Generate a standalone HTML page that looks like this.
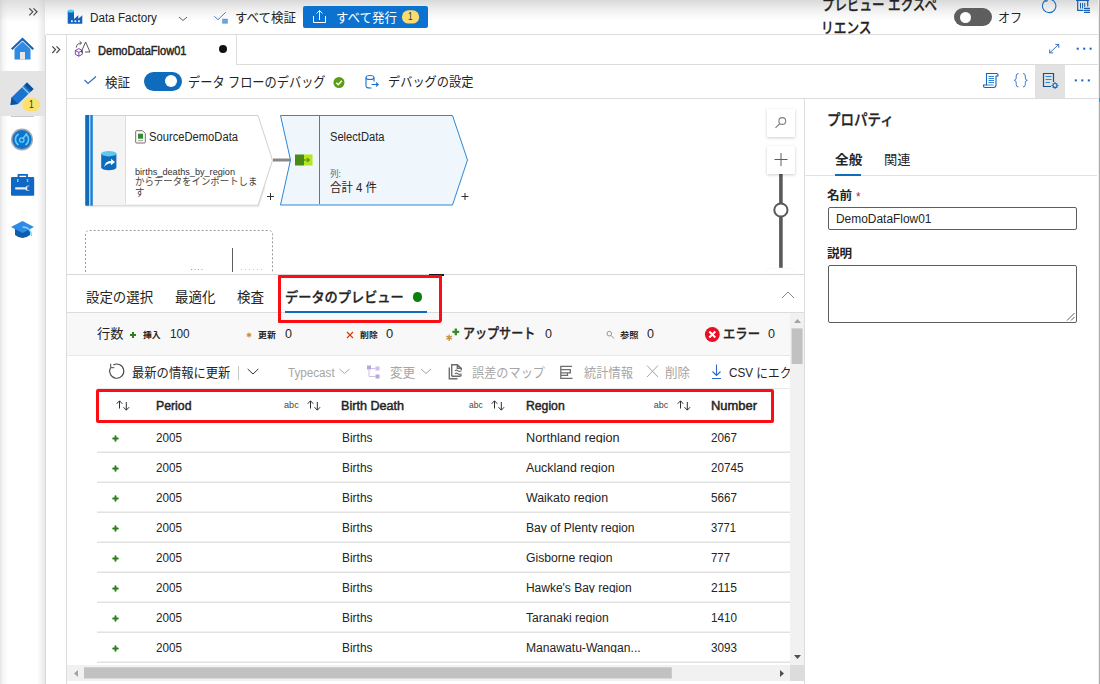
<!DOCTYPE html>
<html lang="ja">
<head>
<meta charset="utf-8">
<title>Data Factory</title>
<style>
*{box-sizing:border-box;margin:0;padding:0}
html,body{width:1100px;height:684px;overflow:hidden;background:#fff}
body{position:relative;font-family:"Liberation Sans","Noto Sans CJK JP",sans-serif;font-size:13px;color:#252423}
.a{position:absolute;white-space:nowrap}
.ln{position:absolute;background:#e1dfdd}
svg{position:absolute;overflow:visible}
.t{position:absolute;white-space:nowrap;line-height:20px;height:20px;transform-origin:0 50%}
</style>
</head>
<body>
<!-- top shadow gradient -->
<div class="a" style="left:0;top:0;width:1100px;height:22px;background:linear-gradient(#d9d9d9 0,#e6e6e6 25%,#f3f3f3 55%,#fcfcfc 85%,#fff 100%)"></div>

<!-- SIDEBAR -->
<div class="a" style="left:0;top:0;width:45px;height:684px;background:linear-gradient(90deg,#e4e4e4 0,#f6f6f6 3px,#fff 8px,#fff 37px,#f4f4f4 41px,#e8e8e8 45px)"></div>
<div class="a" style="left:0;top:0;width:45px;height:22px;background:linear-gradient(rgba(200,200,200,.6),rgba(255,255,255,0))"></div>
<div class="a" style="left:0;top:71px;width:45px;height:45px;background:#e4e4e4"></div>
<div class="ln" style="left:45px;top:35px;width:1px;height:649px;background:#d8d8d8"></div>
<div class="ln" style="left:11px;top:116px;width:23px;height:1px;background:#c8c8c8"></div>
<svg style="left:0;top:0" width="46" height="260">
 <path d="M29.300 8.300 L32.800 11.800 L29.300 15.300 M33.500 8.300 L37 11.800 L33.500 15.300" fill="none" stroke="#484644" stroke-width="1.200"/>
 <!-- home -->
 <path d="M22.500 37.500 L34 48.500 L32.500 50 L22.500 40.500 L12.500 50 L11 48.500 Z" fill="#1565b8"/>
 <path d="M14.500 49 L22.500 41.500 L30.500 49 V59.500 H14.500 Z" fill="#2f8ae6"/>
 <rect x="20" y="52" width="5" height="7.500" fill="#e8e6e3"/>
 <!-- pencil -->
 <path d="M27 82.500 L33.500 89 L18 104 L10.500 105 L11.500 97.500 Z" fill="#1a73cf"/>
 <path d="M27 82.500 L33.500 89 L31 91.500 L24.500 85 Z" fill="#0c4f9c"/>
 <path d="M22.500 87 L29 93.500" stroke="#7fd0f5" stroke-width="1.500"/>
 <path d="M11.500 97.500 L10.500 105 L18 104 Z" fill="#0c4f9c"/>
 <rect x="22.200" y="98" width="18" height="13.300" rx="6.600" fill="#fbe16d"/>
 <!-- monitor -->
 <circle cx="22" cy="139.500" r="11" fill="#a8a8a8"/>
 <circle cx="22" cy="139.500" r="9.600" fill="#1273cf"/>
 <path d="M18.500 145 A6.500 6.500 0 0 1 18.500 134 M25.500 134 A6.500 6.500 0 0 1 25.500 145" fill="none" stroke="#5fd0f7" stroke-width="1.500"/>
 <path d="M22.500 139 L27 133.500" stroke="#5fd0f7" stroke-width="1.600"/>
 <circle cx="21.800" cy="140" r="2.200" fill="none" stroke="#5fd0f7" stroke-width="1.300"/>
 <!-- toolbox -->
 <path d="M18.500 177.500 V174.800 H27 V177.500" fill="none" stroke="#1068c4" stroke-width="1.800"/>
 <rect x="11" y="177" width="23.200" height="18.700" rx="1" fill="#1068c4"/>
 <rect x="17" y="179" width="1.500" height="3" fill="#5fd0f7"/><rect x="26.800" y="179" width="1.500" height="3" fill="#5fd0f7"/>
 <path d="M15.200 187.300 H25.500 A3 3 0 0 1 30 186.200 H27.300 V190.400 H30 A3 3 0 0 1 25.500 189.500 H15.200 Z" fill="#e8eef5"/>
 <!-- grad cap -->
 <path d="M15 229 V235 Q22.500 241 30 235 V229 Z" fill="#0f5bab"/>
 <path d="M11 227 L22.500 221 L34 227 L22.500 233 Z" fill="#2f8ae6"/>
 <path d="M22.500 227 Q31 227 31.500 236" fill="none" stroke="#7fd8f7" stroke-width="1.500"/>
</svg>
<div class="t" style="left:28.8px;top:94.7px;font-size:10px;color:#333;transform:scaleX(0.845);">1</div>

<!-- TOP BAR -->
<div class="ln" style="left:46px;top:34px;width:1054px;height:1px;background:#dcdcdc"></div>
<svg style="left:0;top:0" width="1100" height="35">
 <!-- factory icon -->
 <path d="M67.700 11 V23.700 H82.300 V15.300 L78.300 18.800 V15.300 L74 19 V11 Z" fill="#0f63bd"/>
 <ellipse cx="70.850" cy="11" rx="3.150" ry="1.500" fill="#4fc8f0"/>
 <rect x="71" y="20.300" width="1.800" height="1.800" fill="#e8f0fa"/><rect x="74.500" y="20.300" width="1.800" height="1.800" fill="#e8f0fa"/><rect x="78" y="20.300" width="1.800" height="1.800" fill="#e8f0fa"/>
 <path d="M179 17 L183 20.500 L187 17" fill="none" stroke="#605e5c"/>
 <!-- validate all icon -->
 <path d="M214.300 16.300 L218 19.700 L225.800 12.200" fill="none" stroke="#3a6fc4" stroke-width="0.900"/>
 <rect x="222.200" y="18.800" width="5.600" height="4.800" fill="#5b9bd5"/><path d="M222 20.400 H228 M222 22 H228" stroke="#9cc3ea" stroke-width="0.400"/>
</svg>
<div class="t" style="left:89.5px;top:7.6px;font-size:12px;transform:scaleX(0.975);">Data Factory</div>
<div class="t" style="left:234.5px;top:7.5px;font-size:13px;transform:scaleX(0.959);">すべて検証</div>
<div class="a" style="left:303px;top:6px;width:125px;height:22px;border-radius:2px;background:#0c72d0"></div>
<svg style="left:0;top:0" width="1100" height="35">
 <path d="M313.500 16 V22.500 H325.500 V16 M319.500 20 V11 M316.500 13.500 L319.500 10.500 L322.500 13.500" fill="none" stroke="#fff" stroke-width="1"/>
 <!-- refresh + icon right -->
 <path d="M1051.600 -0.300 A6.700 6.700 0 1 1 1047 -0.400" fill="none" stroke="#1a6fc4" stroke-width="1.100"/>
 <path d="M1047.200 -2 V1.200 H1044.500" fill="none" stroke="#1a6fc4" stroke-width="1"/>
 <path d="M1076 0.300 H1089 M1077.700 0 V10.300 H1083.500 M1087.700 0 V6.500" fill="none" stroke="#1a5fb0" stroke-width="1.200"/>
 <path d="M1080.500 3 V8.500 M1082.600 3 V8.500 M1084.700 3 V7" stroke="#1a5fb0" stroke-width="1"/>
 <path d="M1084 8.300 H1090 M1084 10.300 H1090 M1084 12.300 H1090" stroke="#1a5fb0" stroke-width="1.200"/>
</svg>
<div class="t" style="left:335.5px;top:7.5px;font-size:13px;color:#fff;transform:scaleX(0.959);">すべて発行</div>
<svg style="left:395px;top:5px" width="30" height="24"><rect x="6.900" y="5.300" width="17.300" height="13.300" rx="6.650" fill="#f9dc6e"/></svg>
<div class="t" style="left:408.2px;top:7.2px;font-size:10px;color:#333;transform:scaleX(0.827);">1</div>
<div class="a" style="left:800px;top:0;width:160px;height:34px;overflow:hidden">
<div class="a" style="left:-800px;top:0">
<div class="t" style="left:821.5px;top:-5.5px;font-size:15px;font-weight:500;-webkit-text-stroke:0.3px;transform:scaleX(0.835);">プレビュー エクスペ</div>
<div class="t" style="left:821.0px;top:18.3px;font-size:15px;font-weight:500;-webkit-text-stroke:0.3px;transform:scaleX(0.846);">リエンス</div>
</div></div>
<div class="a" style="left:954px;top:7.500px;width:38px;height:18.500px;border-radius:10px;background:#5e5e5e"></div>
<div class="a" style="left:959.500px;top:11.500px;width:11px;height:11px;border-radius:6px;background:#fff"></div>
<div class="t" style="left:998.0px;top:7.5px;font-size:13px;transform:scaleX(0.930);">オフ</div>

<!-- TAB ROW -->
<div class="ln" style="left:66px;top:35px;width:1px;height:649px;background:#dcdcdc"></div>
<div class="ln" style="left:236px;top:35px;width:1px;height:30px;background:#dcdcdc"></div>
<div class="ln" style="left:236px;top:64px;width:864px;height:1px;background:#dcdcdc"></div>
<div class="ln" style="left:1098px;top:0;width:1px;height:684px;background:#f0f0f0"></div><div class="ln" style="left:1099px;top:0;width:1px;height:684px;background:#ababab"></div>
<div class="a" style="left:1099px;top:98px;width:1px;height:4px;background:#4a90b0"></div>
<svg style="left:0;top:0" width="1100" height="100">
 <path d="M52.300 46.300 L55.500 49.600 L52.300 53 M56.500 46.300 L59.700 49.600 L56.500 53" fill="none" stroke="#484644" stroke-width="1.200"/>
 <!-- dataflow icon -->
 <path d="M75.300 50.500 L78.800 48.600 L82.300 50.500 V54.300 L78.800 56.200 L75.300 54.300 Z M75.300 50.500 L78.800 52.400 L82.300 50.500 M78.800 52.400 V56.200" fill="none" stroke="#6b2fa0" stroke-width="0.900"/>
 <path d="M83 52 L81.200 52 L85.600 42 L90 52 H85" fill="none" stroke="#484644" stroke-width="0.900"/>
 <path d="M76.300 47.500 Q76.800 43.200 81.300 43 M79.600 41.200 L81.600 43 L79.600 44.800" fill="none" stroke="#484644" stroke-width="0.900"/>
 <!-- expand + dots -->
 <path d="M1049.700 52.900 L1058.800 44.400 M1055.300 44.400 H1058.800 V47.900 M1049.700 49.400 V52.900 H1053.200" fill="none" stroke="#2b62c0" stroke-width="0.900"/>
 <rect x="1076.700" y="47.700" width="2" height="2" fill="#1a5fc4"/><rect x="1083.200" y="47.700" width="2" height="2" fill="#1a5fc4"/><rect x="1089.600" y="47.700" width="2" height="2" fill="#1a5fc4"/>
</svg>
<div class="t" style="left:97.5px;top:40.8px;font-size:12px;transform:scaleX(0.921);-webkit-text-stroke:0.45px;">DemoDataFlow01</div>
<div class="a" style="left:218.500px;top:45px;width:8px;height:8px;border-radius:4px;background:#111"></div>

<!-- TOOLBAR 2 -->
<div class="ln" style="left:67px;top:98px;width:1031px;height:1px;background:#dcdcdc"></div>
<div class="a" style="left:1035px;top:65px;width:30px;height:33px;background:#e2e2e2"></div>
<svg style="left:0;top:0" width="1100" height="100">
 <path d="M84.500 80 L88 83.500 L96 76.500" fill="none" stroke="#2b6cc4" stroke-width="1.100"/>
 <!-- green check -->
 <circle cx="339" cy="82.500" r="5.500" fill="#5b9e16"/>
 <path d="M336.300 82.700 L338.300 84.700 L341.800 80.700" fill="none" stroke="#fff" stroke-width="1.400"/>
 <!-- debug settings icon -->
 <path d="M366 77.500 V86 Q366 88 370 88 H371.500 M374 81.500 V77.500" fill="none" stroke="#1a73cf" stroke-width="1.100"/>
 <ellipse cx="370" cy="77.500" rx="4" ry="2" fill="none" stroke="#1a73cf" stroke-width="1.100"/>
 <path d="M371.500 84.500 H378 M376 82.500 L378.200 84.500 L376 86.500" fill="none" stroke="#1a73cf" stroke-width="1.100"/>
 <!-- script icon -->
 <path d="M986.500 73.500 H996.500 Q998 73.500 998 75 V76 H996 V85 Q996 87.500 993.500 87.500 H985 Q983.500 87.500 983.500 86 V85 H986.500 Z" fill="none" stroke="#1565b8" stroke-width="1.100"/>
 <path d="M988.500 76.500 H994 M988.500 78.500 H994 M988.500 80.500 H994 M988.500 82.500 H994 M986.500 85 H993.500" stroke="#2b88d8" stroke-width="1"/>
 <path d="M1018.500 73.500 Q1016.200 73.500 1016.200 76 V78 Q1016.200 80 1014.200 80.300 Q1016.200 80.600 1016.200 82.500 V84.500 Q1016.200 87 1018.500 87 M1023 73.500 Q1025.300 73.500 1025.300 76 V78 Q1025.300 80 1027.300 80.300 Q1025.300 80.600 1025.300 82.500 V84.500 Q1025.300 87 1023 87" fill="none" stroke="#3a7bd0" stroke-width="1"/>
 <!-- properties icon -->
 <path d="M1051 86.500 H1043.500 V73.500 H1053.500 V82" fill="none" stroke="#1b4f91" stroke-width="1.200"/>
 <path d="M1045.500 76.500 H1051.500 M1045.500 79.500 H1051.500 M1045.500 82.500 H1050" stroke="#2b88d8" stroke-width="1.200"/>
 <circle cx="1055" cy="85.500" r="2" fill="none" stroke="#1565b8" stroke-width="1.200"/>
 <path d="M1055 82 V83 M1055 88 V89 M1051.500 85.500 H1052.500 M1057.500 85.500 H1058.500 M1052.600 83.100 L1053.300 83.800 M1056.700 87.200 L1057.400 87.900 M1052.600 87.900 L1053.300 87.200 M1056.700 83.800 L1057.400 83.100" stroke="#1565b8" stroke-width="1"/>
 <rect x="1074.800" y="79.400" width="2" height="2" fill="#1a5fc4"/><rect x="1081.300" y="79.400" width="2" height="2" fill="#1a5fc4"/><rect x="1087.800" y="79.400" width="2" height="2" fill="#1a5fc4"/>
</svg>
<div class="t" style="left:104.5px;top:73.0px;font-size:13px;transform:scaleX(0.961);">検証</div>
<div class="a" style="left:144px;top:72px;width:38px;height:18.500px;border-radius:10px;background:#0f6cbd"></div>
<div class="a" style="left:164.500px;top:75.300px;width:12px;height:12px;border-radius:6px;background:#fff"></div>
<div class="t" style="left:187.5px;top:71.8px;font-size:14px;transform:scaleX(0.871);">データ フローのデバッグ</div>
<div class="t" style="left:387.5px;top:71.8px;font-size:13px;transform:scaleX(0.938);">デバッグの設定</div>

<!-- CANVAS (page coords) -->
<svg style="left:0;top:0" width="1100" height="684">
 <!-- source node -->
 <path d="M86 206.500 H258.500 L265 186" fill="none" stroke="#ececec" stroke-width="1.500"/>
 <path d="M85.500 115.500 H258 L272.500 160.300 L258 205.200 H85.500 Z" fill="#fff" stroke="#d2d0ce" stroke-width="1"/>
 <rect x="93" y="116" width="32" height="88.700" fill="#f4f4f4"/>
 <line x1="125.500" y1="116" x2="125.500" y2="204.700" stroke="#e1dfdd"/>
 <rect x="85.300" y="115" width="4" height="90.700" fill="#0f6cbd"/>
 <rect x="90.300" y="115" width="2.500" height="90.700" fill="#1a7fd6"/>
 <!-- connector -->
 <rect x="273" y="158.500" width="18" height="3" fill="#8a8886"/>
 <!-- select node -->
 <path d="M280.500 115.500 H452.500 L467.500 160 L452.500 205 H280.500 L290.500 160 Z" fill="#eff6fc" stroke="#2b88d8" stroke-width="1"/>
 <line x1="319.500" y1="116" x2="319.500" y2="204" stroke="#2b88d8"/>
 <!-- select icon -->
 <rect x="295" y="154.500" width="9" height="11" fill="#4b8a14"/>
 <rect x="304" y="154.500" width="8.500" height="11" fill="#b5e61d"/>
 <path d="M303 160 H309 M307 158 L309.500 160 L307 162" stroke="#3c7a10" stroke-width="1" fill="none"/>
 <!-- plus signs -->
 <path d="M267 196.500 H274 M270.500 193 V200" stroke="#323130" stroke-width="1"/>
 <path d="M461.500 196.500 H468.500 M465 193 V200" stroke="#323130" stroke-width="1"/>
 <!-- DB icon -->
 <path d="M101.200 153.700 V167.500 A7.600 2.700 0 0 0 116.400 167.500 V153.700 Z" fill="#0f6cbd"/>
 <ellipse cx="108.800" cy="153.700" rx="7.600" ry="2.700" fill="#5ec8ee"/>
 <path d="M104.300 167 C104.800 162.500 108 161 111 161 V158.800 L115 162 L111 165.200 V163.200 C108.300 163.200 105.800 164.300 104.300 167 Z" fill="#fff"/>
 <!-- file icon -->
 <path d="M135.700 131.500 Q135.700 130.700 136.500 130.700 H142.500 L145.300 133.500 V142.200 Q145.300 143 144.500 143 H136.500 Q135.700 143 135.700 142.200 Z" fill="#fff" stroke="#605e5c" stroke-width="0.900"/>
 <rect x="138" y="133.700" width="5" height="5" fill="#2e8b2e"/>
 <path d="M138 140.700 H143" stroke="#8a8886" stroke-width="0.800"/>
 <!-- dashed box -->
 <path d="M85.500 272 V234.500 Q85.500 230.500 89.500 230.500 H268.500 Q272.500 230.500 272.500 234.500 V272" fill="none" stroke="#9a9a9a" stroke-dasharray="2 2"/>
 <line x1="232.500" y1="248" x2="232.500" y2="272" stroke="#605e5c"/>
 <line x1="191" y1="269.500" x2="203" y2="269.500" stroke="#a19f9d" stroke-dasharray="1 2.500"/>
 <line x1="241" y1="269.500" x2="264" y2="269.500" stroke="#c8c6c4" stroke-dasharray="1 3"/>
 <!-- zoom ctl -->
 <rect x="779.100" y="174" width="3.600" height="93.800" fill="#595959"/>
 <circle cx="780.900" cy="210" r="6.600" fill="#fff" stroke="#595959" stroke-width="2"/>
 <circle cx="782.300" cy="121" r="3.400" fill="none" stroke="#807e7c" stroke-width="1.100"/>
 <line x1="779.800" y1="123.500" x2="775.500" y2="127.800" stroke="#807e7c" stroke-width="1.100"/>
 <path d="M774.500 159.500 H787.500 M781 153 V166" stroke="#605e5c" stroke-width="1"/>
</svg>
<div class="a" style="left:767px;top:109px;width:28px;height:28px;box-shadow:0 1px 3px rgba(0,0,0,.2)"></div>
<div class="a" style="left:767px;top:146px;width:28px;height:28px;box-shadow:0 1px 3px rgba(0,0,0,.2)"></div>
<div class="a" style="left:767px;top:269px;width:28px;height:5px;background:#fff;box-shadow:0 0 2px rgba(0,0,0,.08)"></div>
<div class="t" style="left:148.5px;top:127.0px;font-size:12px;transform:scaleX(0.933);">SourceDemoData</div>
<div class="t" style="left:135.0px;top:162.0px;font-size:9.5px;color:#323130;transform:scaleX(0.961);">births_deaths_by_region</div>
<div class="t" style="left:135.0px;top:172.0px;font-size:10px;color:#484644;transform:scaleX(0.942);">からデータをインポートしま</div>
<div class="t" style="left:135.0px;top:182.5px;font-size:10px;color:#484644;transform:scaleX(0.950);">す</div>
<div class="t" style="left:329.5px;top:127.0px;font-size:12px;transform:scaleX(0.928);">SelectData</div>
<div class="t" style="left:329.5px;top:164.0px;font-size:9px;color:#605e5c;transform:scaleX(0.955);">列:</div>
<div class="t" style="left:329.5px;top:177.5px;font-size:12px;transform:scaleX(0.953);">合計 4 件</div>

<!-- RIGHT PANEL -->
<div class="ln" style="left:804px;top:99px;width:1px;height:585px;background:#dcdcdc"></div>
<div class="t" style="left:827.3px;top:110.0px;font-size:15px;font-weight:500;-webkit-text-stroke:0.3px;transform:scaleX(0.900);">プロパティ</div>
<div class="t" style="left:834.5px;top:149.7px;font-size:13px;font-weight:bold;transform:scaleX(1.049);">全般</div>
<div class="t" style="left:883.5px;top:149.7px;font-size:13px;transform:scaleX(1.022);">関連</div>
<div class="ln" style="left:805px;top:175px;width:292px;height:1px;background:#e1e1e1"></div>
<div class="a" style="left:835px;top:173.500px;width:26px;height:2.500px;background:#0f6cbd"></div>
<div class="t" style="left:827.3px;top:186.0px;font-size:12px;font-weight:bold;transform:scaleX(1.049);">名前</div>
<div class="t" style="left:856.0px;top:187.0px;font-size:12px;color:#a4262c;transform:scaleX(0.963);">*</div>
<div class="a" style="left:827.500px;top:207px;width:249.500px;height:23px;border:1px solid #605e5c;border-radius:2px"></div>
<div class="t" style="left:836.0px;top:209.0px;font-size:12px;transform:scaleX(0.994);">DemoDataFlow01</div>
<div class="t" style="left:827.3px;top:244.0px;font-size:12px;font-weight:bold;transform:scaleX(1.049);">説明</div>
<div class="a" style="left:827.500px;top:265px;width:249.500px;height:58px;border:1px solid #605e5c;border-radius:2px"></div>
<svg style="left:1066px;top:312px" width="9" height="9"><path d="M1 8.500 L8.500 1 M5 8.500 L8.500 5" stroke="#605e5c" stroke-width="1"/></svg>

<!-- BOTTOM PANEL -->
<div class="ln" style="left:67px;top:274px;width:737px;height:1px;background:#d8d8d8"></div>
<div class="t" style="left:86.4px;top:286.5px;font-size:14px;transform:scaleX(0.959);">設定の選択</div>
<div class="t" style="left:174.7px;top:286.5px;font-size:14px;transform:scaleX(0.962);">最適化</div>
<div class="t" style="left:236.5px;top:286.5px;font-size:14px;transform:scaleX(0.964);">検査</div>
<div class="t" style="left:285.4px;top:286.5px;font-size:14px;font-weight:500;-webkit-text-stroke:0.3px;transform:scaleX(0.942);">データのプレビュー</div>
<div class="a" style="left:412.800px;top:292.300px;width:9.400px;height:9.400px;border-radius:5px;background:#0c800c"></div>
<div class="a" style="left:428.700px;top:273.500px;width:15px;height:2px;background:#1a1a1a"></div>
<svg style="left:781px;top:291px" width="14" height="8"><path d="M1 7 L7 1 L13 7" fill="none" stroke="#8a8886"/></svg>
<div class="a" style="left:67px;top:313px;width:723px;height:42px;background:#f8f8f8"></div>
<div class="ln" style="left:67px;top:312px;width:737px;height:1px;background:#dcdcdc"></div>
<div class="ln" style="left:67px;top:355px;width:723px;height:1px;background:#e8e8e8"></div>
<div class="a" style="left:285px;top:311px;width:142px;height:2px;background:#0f6cbd"></div>
<div class="a" style="left:278px;top:274.700px;width:164px;height:48px;border:3px solid #fb0d13;border-radius:1px 1px 3px 1px"></div>
<!-- stats row -->
<svg style="left:0;top:320px" width="804" height="30">
 <path d="M133 12 V18 M130 15 H136" stroke="#2e7d1e" stroke-width="2"/>
 <path d="M249.00 12.40 L249.00 17.60 M246.75 13.70 L251.25 16.30 M251.25 13.70 L246.75 16.30" stroke="#c98d35" stroke-width="1.100"/>
 <path d="M347 12 L353 18 M353 12 L347 18" stroke="#d83b01" stroke-width="1.200"/>
 <path d="M449.20 14.50 L449.20 20.90 M446.43 16.10 L451.97 19.30 M451.97 16.10 L446.43 19.30" stroke="#c98d35" stroke-width="1.300"/>
 <path d="M455.800 8.500 V15.300 M452.400 11.900 H459.200" stroke="#3a8a2a" stroke-width="2.400"/>
 <circle cx="609.300" cy="13.700" r="2.300" fill="none" stroke="#8a8886" stroke-width="0.900"/><path d="M611 15.500 L614 18.500" stroke="#8a8886" stroke-width="0.900"/>
 <circle cx="712.300" cy="14.500" r="7.400" fill="#e81123"/>
 <path d="M709.300 11.500 L715.300 17.500 M715.300 11.500 L709.300 17.500" stroke="#fff" stroke-width="2"/>
</svg>
<div class="t" style="left:96.5px;top:323.7px;font-size:13px;transform:scaleX(1.019);">行数</div>
<div class="t" style="left:142.9px;top:325.0px;font-size:8.5px;font-weight:bold;transform:scaleX(1.034);">挿入</div>
<div class="t" style="left:169.5px;top:323.7px;font-size:12px;transform:scaleX(0.983);">100</div>
<div class="t" style="left:257.9px;top:325.0px;font-size:8.5px;font-weight:bold;transform:scaleX(1.046);">更新</div>
<div class="t" style="left:284.5px;top:323.7px;font-size:12px;transform:scaleX(1.047);">0</div>
<div class="t" style="left:360.1px;top:325.0px;font-size:8.5px;font-weight:bold;transform:scaleX(1.046);">削除</div>
<div class="t" style="left:386.3px;top:323.7px;font-size:12px;transform:scaleX(1.077);">0</div>
<div class="t" style="left:462.9px;top:322.6px;font-size:14px;font-weight:500;-webkit-text-stroke:0.3px;transform:scaleX(0.860);">アップサート</div>
<div class="t" style="left:544.9px;top:323.7px;font-size:12px;transform:scaleX(1.047);">0</div>
<div class="t" style="left:620.0px;top:325.0px;font-size:8.5px;font-weight:bold;transform:scaleX(1.087);">参照</div>
<div class="t" style="left:646.8px;top:323.7px;font-size:12px;transform:scaleX(1.047);">0</div>
<div class="t" style="left:722.5px;top:323.7px;font-size:13px;font-weight:500;-webkit-text-stroke:0.3px;transform:scaleX(0.948);">エラー</div>
<div class="t" style="left:768.0px;top:323.7px;font-size:12px;transform:scaleX(1.047);">0</div>
<!-- action row -->
<svg style="left:0;top:360px" width="804" height="30">
 <path d="M113.37 4.93 A7.1 7.1 0 1 1 110.43 7.87" fill="none" stroke="#484644" stroke-width="1.100"/>
 <path d="M110.700 3.800 V7.700 H114.300" fill="none" stroke="#484644" stroke-width="1"/>
 <path d="M247.700 9 L253 14 L258.300 9" fill="none" stroke="#323130"/>
 <path d="M339.500 9 L344.500 13.500 L349.500 9" fill="none" stroke="#a6a6a6"/>
 <path d="M421 9 L426 13.500 L431 9" fill="none" stroke="#a6a6a6"/>
 <!-- change icon purple -->
 <rect x="367" y="5.500" width="4" height="4" fill="#b9a4dd"/><rect x="375.500" y="6.500" width="4" height="4" fill="#cdbfe8"/><rect x="375.500" y="14.500" width="4" height="4" fill="#b9a4dd"/>
 <path d="M369 9.500 V16.500 H375.500 M371 8.500 H375.500" fill="none" stroke="#cdbfe8" stroke-width="1"/>
 <!-- error map icon -->
 <path d="M449.300 7.500 V18.700 H457.500 M451.700 16.300 V4.700 H457.300 L461.300 8.300 V10 M451.700 16.300 H459.500 Q461.300 16.300 461.300 14.800 M457.300 4.700 V8.300 H461.300" fill="none" stroke="#6e6e6e" stroke-width="1.400"/>
 <path d="M455 10.800 Q456.500 9.500 458 10.800 T461.500 10.600 M455 13.800 Q456.500 12.500 458 13.800 T461.500 13.600" fill="none" stroke="#6e6e6e" stroke-width="1.100"/>
 <!-- stats icon -->
 <path d="M560.800 5.800 V18.300 H572.500 M560.800 6.400 H572 M560.800 9.700 H570.300 V12.800 H560.800 M560.800 15.400 H567.500 V12.800" fill="none" stroke="#6e6e6e" stroke-width="1.300"/>
 <path d="M647 5.500 L658 17 M658 5.500 L647 17" stroke="#a6a6a6" stroke-width="1"/>
 <path d="M716.500 4.500 V15.500 M712.500 11.500 L716.500 15.500 L720.500 11.500 M712 18.500 H721" fill="none" stroke="#2b6cc4" stroke-width="1.100"/>
</svg>
<div class="t" style="left:131.5px;top:362.5px;font-size:13px;transform:scaleX(0.946);">最新の情報に更新</div>
<div class="a" style="left:238px;top:366px;width:1px;height:14px;background:#c8c6c4"></div>
<div class="t" style="left:287.5px;top:362.5px;font-size:12px;color:#a6a6a6;transform:scaleX(0.972);">Typecast</div>
<div class="t" style="left:390.1px;top:362.5px;font-size:13px;color:#a6a6a6;transform:scaleX(0.969);">変更</div>
<div class="t" style="left:472.1px;top:362.5px;font-size:13px;color:#a6a6a6;transform:scaleX(0.936);">誤差のマップ</div>
<div class="t" style="left:583.5px;top:362.5px;font-size:13px;color:#a6a6a6;transform:scaleX(0.942);">統計情報</div>
<div class="t" style="left:665.1px;top:362.5px;font-size:13px;color:#a6a6a6;transform:scaleX(0.961);">削除</div>
<div class="a" style="left:720px;top:360px;width:70px;height:28px;overflow:hidden"><div class="a" style="left:-720px;top:-360px"><div class="t" style="left:728.5px;top:362.5px;font-size:13px;transform:scaleX(0.901);">CSV にエクスポート</div></div></div>
<div class="ln" style="left:97px;top:388px;width:693px;height:1px;background:#e8e8e8"></div>
<!-- header row -->
<svg style="left:115.500px;top:399.500px" width="14" height="11"><path d="M3.500 8.500 V1 M0.700 3.800 L3.500 0.800 L6.300 3.800 M10.300 2 V10 M7.500 7.200 L10.300 10.200 L13.100 7.200" fill="none" stroke="#323130" stroke-width="1"/></svg>
<svg style="left:306.800px;top:399.500px" width="14" height="11"><path d="M3.500 8.500 V1 M0.700 3.800 L3.500 0.800 L6.300 3.800 M10.300 2 V10 M7.500 7.200 L10.300 10.200 L13.100 7.200" fill="none" stroke="#323130" stroke-width="1"/></svg>
<svg style="left:491px;top:399.500px" width="14" height="11"><path d="M3.500 8.500 V1 M0.700 3.800 L3.500 0.800 L6.300 3.800 M10.300 2 V10 M7.500 7.200 L10.300 10.200 L13.100 7.200" fill="none" stroke="#323130" stroke-width="1"/></svg>
<svg style="left:676.500px;top:399.500px" width="14" height="11"><path d="M3.500 8.500 V1 M0.700 3.800 L3.500 0.800 L6.300 3.800 M10.300 2 V10 M7.500 7.200 L10.300 10.200 L13.100 7.200" fill="none" stroke="#323130" stroke-width="1"/></svg>
<div class="t" style="left:156.2px;top:396.0px;font-size:12px;color:#252423;transform:scaleX(1.023);-webkit-text-stroke:0.45px;">Period</div>
<div class="t" style="left:283.8px;top:395.0px;font-size:9px;color:#484644;transform:scaleX(1.013);">abc</div>
<div class="t" style="left:341.3px;top:396.0px;font-size:12px;color:#252423;transform:scaleX(1.051);-webkit-text-stroke:0.45px;">Birth Death</div>
<div class="t" style="left:468.5px;top:395.0px;font-size:9px;color:#484644;transform:scaleX(0.944);">abc</div>
<div class="t" style="left:526.3px;top:396.0px;font-size:12px;color:#252423;transform:scaleX(1.018);-webkit-text-stroke:0.45px;">Region</div>
<div class="t" style="left:653.8px;top:395.0px;font-size:9px;color:#484644;">abc</div>
<div class="t" style="left:710.9px;top:396.0px;font-size:12px;color:#252423;transform:scaleX(1.078);-webkit-text-stroke:0.45px;">Number</div>
<div class="a" style="left:96px;top:389px;width:677.500px;height:33.500px;border:3px solid #fb0d13;border-radius:2px"></div>
<svg style="left:0;top:447px" width="804" height="10"><line x1="97" y1="5.300" x2="790" y2="5.300" stroke="#e2e2e2" stroke-width="1.600"/></svg>
<div class="a" style="left:0;top:428px;width:803px;height:15px;overflow:hidden"><div class="a" style="left:0;top:-428px"><div class="t" style="left:156.2px;top:427.8px;font-size:12px;transform:scaleX(0.974);">2005</div><div class="t" style="left:341.5px;top:427.8px;font-size:12px;transform:scaleX(0.994);">Births</div><div class="t" style="left:525.9px;top:427.8px;font-size:12px;transform:scaleX(1.055);">Northland region</div><div class="t" style="left:710.9px;top:427.8px;font-size:12px;transform:scaleX(0.974);">2067</div></div></div>
<svg style="left:112px;top:435px" width="7" height="7"><path d="M3.500 1.200 V5.800 M1.200 3.500 H5.800" stroke="#2e7d1e" stroke-width="2" stroke-linecap="round"/></svg>
<svg style="left:0;top:477px" width="804" height="10"><line x1="97" y1="5.300" x2="790" y2="5.300" stroke="#e2e2e2" stroke-width="1.600"/></svg>
<div class="a" style="left:0;top:458px;width:803px;height:15px;overflow:hidden"><div class="a" style="left:0;top:-458px"><div class="t" style="left:156.2px;top:457.8px;font-size:12px;transform:scaleX(0.974);">2005</div><div class="t" style="left:341.5px;top:457.8px;font-size:12px;transform:scaleX(0.994);">Births</div><div class="t" style="left:525.9px;top:457.8px;font-size:12px;transform:scaleX(1.029);">Auckland region</div><div class="t" style="left:710.9px;top:457.8px;font-size:12px;transform:scaleX(0.974);">20745</div></div></div>
<svg style="left:112px;top:465px" width="7" height="7"><path d="M3.500 1.200 V5.800 M1.200 3.500 H5.800" stroke="#2e7d1e" stroke-width="2" stroke-linecap="round"/></svg>
<svg style="left:0;top:507px" width="804" height="10"><line x1="97" y1="5.300" x2="790" y2="5.300" stroke="#e2e2e2" stroke-width="1.600"/></svg>
<div class="a" style="left:0;top:488px;width:803px;height:15px;overflow:hidden"><div class="a" style="left:0;top:-488px"><div class="t" style="left:156.2px;top:487.8px;font-size:12px;transform:scaleX(0.974);">2005</div><div class="t" style="left:341.5px;top:487.8px;font-size:12px;transform:scaleX(0.994);">Births</div><div class="t" style="left:525.9px;top:487.8px;font-size:12px;transform:scaleX(1.031);">Waikato region</div><div class="t" style="left:710.9px;top:487.8px;font-size:12px;transform:scaleX(0.974);">5667</div></div></div>
<svg style="left:112px;top:495px" width="7" height="7"><path d="M3.500 1.200 V5.800 M1.200 3.500 H5.800" stroke="#2e7d1e" stroke-width="2" stroke-linecap="round"/></svg>
<svg style="left:0;top:537px" width="804" height="10"><line x1="97" y1="5.300" x2="790" y2="5.300" stroke="#e2e2e2" stroke-width="1.600"/></svg>
<div class="a" style="left:0;top:518px;width:803px;height:15px;overflow:hidden"><div class="a" style="left:0;top:-518px"><div class="t" style="left:156.2px;top:517.8px;font-size:12px;transform:scaleX(0.974);">2005</div><div class="t" style="left:341.5px;top:517.8px;font-size:12px;transform:scaleX(0.994);">Births</div><div class="t" style="left:525.9px;top:517.8px;font-size:12px;transform:scaleX(1.011);">Bay of Plenty region</div><div class="t" style="left:710.9px;top:517.8px;font-size:12px;transform:scaleX(0.936);">3771</div></div></div>
<svg style="left:112px;top:525px" width="7" height="7"><path d="M3.500 1.200 V5.800 M1.200 3.500 H5.800" stroke="#2e7d1e" stroke-width="2" stroke-linecap="round"/></svg>
<svg style="left:0;top:567px" width="804" height="10"><line x1="97" y1="5.300" x2="790" y2="5.300" stroke="#e2e2e2" stroke-width="1.600"/></svg>
<div class="a" style="left:0;top:548px;width:803px;height:15px;overflow:hidden"><div class="a" style="left:0;top:-548px"><div class="t" style="left:156.2px;top:547.8px;font-size:12px;transform:scaleX(0.974);">2005</div><div class="t" style="left:341.5px;top:547.8px;font-size:12px;transform:scaleX(0.994);">Births</div><div class="t" style="left:525.9px;top:547.8px;font-size:12px;transform:scaleX(1.014);">Gisborne region</div><div class="t" style="left:710.9px;top:547.8px;font-size:12px;transform:scaleX(0.949);">777</div></div></div>
<svg style="left:112px;top:555px" width="7" height="7"><path d="M3.500 1.200 V5.800 M1.200 3.500 H5.800" stroke="#2e7d1e" stroke-width="2" stroke-linecap="round"/></svg>
<svg style="left:0;top:597px" width="804" height="10"><line x1="97" y1="5.300" x2="790" y2="5.300" stroke="#e2e2e2" stroke-width="1.600"/></svg>
<div class="a" style="left:0;top:578px;width:803px;height:15px;overflow:hidden"><div class="a" style="left:0;top:-578px"><div class="t" style="left:156.2px;top:577.8px;font-size:12px;transform:scaleX(0.974);">2005</div><div class="t" style="left:341.5px;top:577.8px;font-size:12px;transform:scaleX(0.994);">Births</div><div class="t" style="left:525.9px;top:577.8px;font-size:12px;">Hawke's Bay region</div><div class="t" style="left:710.9px;top:577.8px;font-size:12px;transform:scaleX(1.007);">2115</div></div></div>
<svg style="left:112px;top:585px" width="7" height="7"><path d="M3.500 1.200 V5.800 M1.200 3.500 H5.800" stroke="#2e7d1e" stroke-width="2" stroke-linecap="round"/></svg>
<svg style="left:0;top:627px" width="804" height="10"><line x1="97" y1="5.300" x2="790" y2="5.300" stroke="#e2e2e2" stroke-width="1.600"/></svg>
<div class="a" style="left:0;top:608px;width:803px;height:15px;overflow:hidden"><div class="a" style="left:0;top:-608px"><div class="t" style="left:156.2px;top:607.8px;font-size:12px;transform:scaleX(0.974);">2005</div><div class="t" style="left:341.5px;top:607.8px;font-size:12px;transform:scaleX(0.994);">Births</div><div class="t" style="left:525.9px;top:607.8px;font-size:12px;transform:scaleX(1.007);">Taranaki region</div><div class="t" style="left:710.9px;top:607.8px;font-size:12px;transform:scaleX(0.974);">1410</div></div></div>
<svg style="left:112px;top:615px" width="7" height="7"><path d="M3.500 1.200 V5.800 M1.200 3.500 H5.800" stroke="#2e7d1e" stroke-width="2" stroke-linecap="round"/></svg>
<svg style="left:0;top:657px" width="804" height="10"><line x1="97" y1="5.300" x2="790" y2="5.300" stroke="#e2e2e2" stroke-width="1.600"/></svg>
<div class="a" style="left:0;top:638px;width:803px;height:15px;overflow:hidden"><div class="a" style="left:0;top:-638px"><div class="t" style="left:156.2px;top:637.8px;font-size:12px;transform:scaleX(0.974);">2005</div><div class="t" style="left:341.5px;top:637.8px;font-size:12px;transform:scaleX(0.994);">Births</div><div class="t" style="left:525.9px;top:637.8px;font-size:12px;transform:scaleX(1.009);">Manawatu-Wangan...</div><div class="t" style="left:710.9px;top:637.8px;font-size:12px;transform:scaleX(0.974);">3093</div></div></div>
<svg style="left:112px;top:645px" width="7" height="7"><path d="M3.500 1.200 V5.800 M1.200 3.500 H5.800" stroke="#2e7d1e" stroke-width="2" stroke-linecap="round"/></svg>

<!-- scrollbars -->
<div class="a" style="left:790px;top:313px;width:14px;height:352px;background:#f1f1f1"></div>
<svg style="left:780px;top:320px" width="24" height="50"><rect x="11.600" y="8.400" width="11" height="35.600" fill="#c1c1c1"/></svg>
<svg style="left:793.700px;top:319px" width="7" height="4"><path d="M0 4 L3.500 0 L7 4 Z" fill="#a3a3a3"/></svg>
<svg style="left:793.700px;top:655px" width="7" height="4"><path d="M0 0 L3.500 4 L7 0 Z" fill="#505050"/></svg>
<div class="a" style="left:67px;top:665px;width:737px;height:16px;background:#f1f1f1"></div>
<div class="a" style="left:790px;top:665px;width:14px;height:16px;background:#dcdcdc"></div>
<svg style="left:0;top:660px" width="804" height="24"><rect x="84" y="7.300" width="587.800" height="11.200" fill="#c1c1c1"/></svg>
<svg style="left:74.200px;top:669.800px" width="4" height="7"><path d="M4 0 L0 3.500 L4 7 Z" fill="#a3a3a3"/></svg>
<svg style="left:780px;top:669.800px" width="4" height="7"><path d="M0 0 L4 3.500 L0 7 Z" fill="#505050"/></svg>
</body>
</html>
